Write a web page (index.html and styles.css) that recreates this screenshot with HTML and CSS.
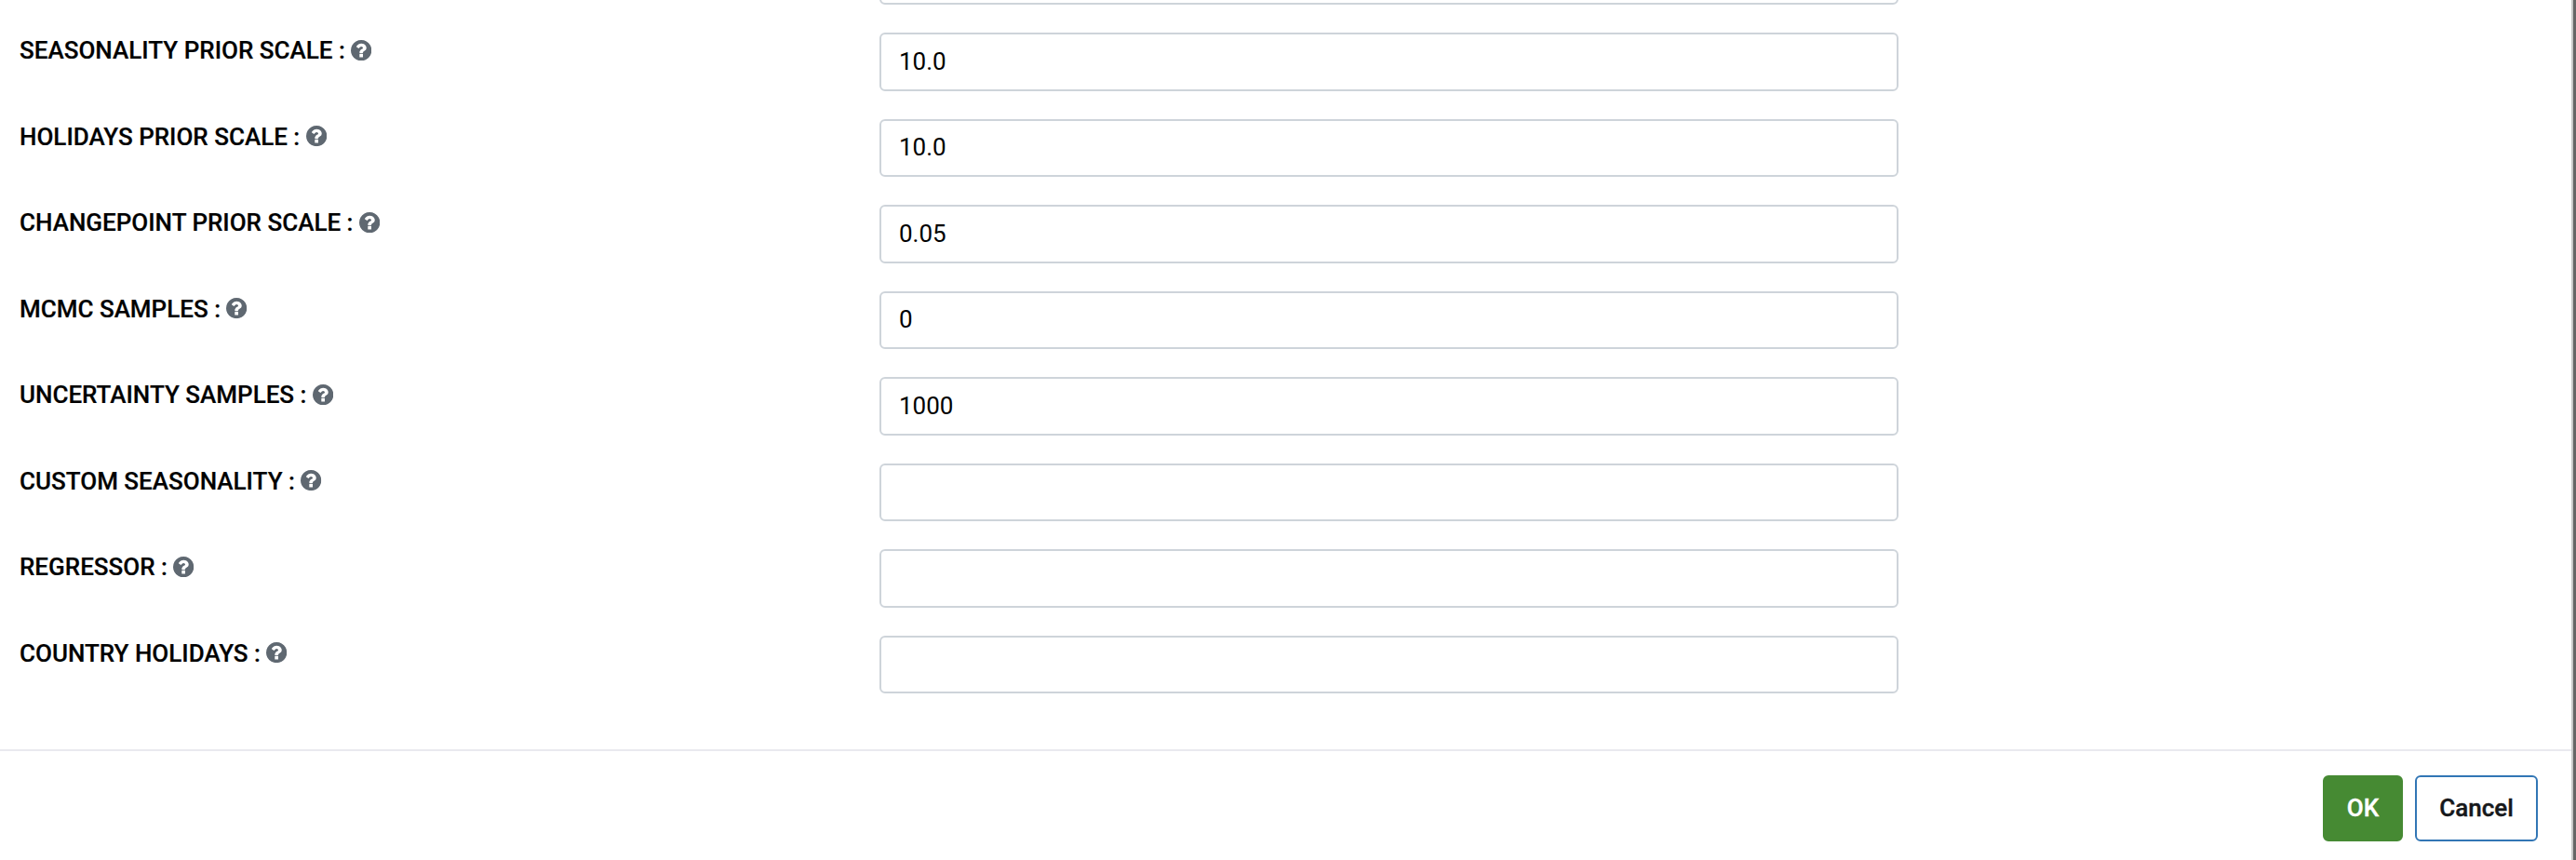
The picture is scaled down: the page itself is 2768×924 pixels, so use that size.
FILE: index.html
```
<!DOCTYPE html>
<html lang="en">
<head>
<meta charset="utf-8">
<title>Model parameters</title>
<link rel="stylesheet" href="styles.css">
</head>
<body>
<svg class="sprite" aria-hidden="true">
  <symbol id="help" viewBox="128 128 1536 1536">
    <path d="M1024 1376v-192q0-14-9-23t-23-9h-192q-14 0-23 9t-9 23v192q0 14 9 23t23 9h192q14 0 23-9t9-23zm256-672q0-88-55.500-163t-138.500-116-170-41q-243 0-371 213-15 24 8 42l132 100q7 6 19 6 16 0 25-12 53-68 86-92 34-24 86-24 48 0 85.500 26t37.500 59q0 38-20 61t-68 45q-63 28-115.500 86.500t-52.500 125.500v36q0 14 9 23t23 9h192q14 0 23-9t9-23q0-19 21.500-49.500t54.500-49.500q32-18 49-28.500t46-35 44.500-48 28-60.500 12.500-81zm384 192q0 209-103 385.500t-279.500 279.500-385.500 103-385.500-103-279.500-279.500-103-385.500 103-385.500 279.500-279.500 385.500-103 385.500 103 279.500 279.500 103 385.500z"/>
  </symbol>
</svg>
<div class="dialog">
  <main class="form">
    <div class="row"><span></span><input class="field" type="text"></div>
    <div class="row"><label class="label">SEASONALITY PRIOR SCALE :<svg class="help"><use href="#help"/></svg></label><input class="field" type="text" value="10.0"></div>
    <div class="row"><label class="label">HOLIDAYS PRIOR SCALE :<svg class="help"><use href="#help"/></svg></label><input class="field" type="text" value="10.0"></div>
    <div class="row"><label class="label">CHANGEPOINT PRIOR SCALE :<svg class="help"><use href="#help"/></svg></label><input class="field" type="text" value="0.05"></div>
    <div class="row"><label class="label">MCMC SAMPLES :<svg class="help"><use href="#help"/></svg></label><input class="field" type="text" value="0"></div>
    <div class="row"><label class="label">UNCERTAINTY SAMPLES :<svg class="help"><use href="#help"/></svg></label><input class="field" type="text" value="1000"></div>
    <div class="row"><label class="label">CUSTOM SEASONALITY :<svg class="help"><use href="#help"/></svg></label><input class="field" type="text"></div>
    <div class="row"><label class="label">REGRESSOR :<svg class="help"><use href="#help"/></svg></label><input class="field" type="text"></div>
    <div class="row"><label class="label">COUNTRY HOLIDAYS :<svg class="help"><use href="#help"/></svg></label><input class="field" type="text"></div>
  </main>
  <footer class="footer">
    <button class="button ok">OK</button>
    <button class="button cancel">Cancel</button>
  </footer>
</div>
</body>
</html>
```
FILE: styles.css
```
* { box-sizing: border-box; }

body {
  margin: 0;
  height: 924px;
  overflow: hidden;
  background: #666;
  font: 26px/30px Roboto, sans-serif;
  color: #000;
}

.sprite { display: none; }

.dialog {
  display: flex;
  flex-direction: column;
  width: 2765px;
  height: 924px;
  overflow: hidden;
  background: #fff;
  border-right: 2px solid #c8c8c8;
}

/* The form is scrolled so that its first row is partly out of view. */
.form {
  flex: none;
  height: 862.5px;
  margin-top: -57.5px;
}

.row {
  display: grid;
  grid-template-columns: 924px 1095px;
  height: 92.5px;
  padding-left: 21px;
}

.label {
  display: flex;
  align-items: center;
  height: 30px;
  margin-top: 4px;
  font-weight: 500;
  -webkit-text-stroke: 0.2px;
}

.help {
  width: 22.3px;
  height: 22.3px;
  margin-left: 6.4px;
  fill: #5f6871;
  -webkit-text-stroke: 0;
}

.field {
  width: 1095px;
  height: 62.5px;
  padding: 0 19px 1px;
  border: 2px solid #ced4da;
  border-radius: 6px;
  background: #fff;
  font: inherit;
  color: #000;
}

.footer {
  display: flex;
  flex: 1;
  justify-content: flex-end;
  gap: 13px;
  padding: 26px 36px 0 0;
  border-top: 2px solid #e9e9ef;
}

.button {
  height: 71px;
  padding: 0 0 2px;
  border: 2px solid;
  border-radius: 6px;
  font: 500 26px/30px Roboto, sans-serif;
  -webkit-text-stroke: 0.4px;
}

.ok {
  width: 86px;
  background: #468a33;
  border-color: #468a33;
  color: #fff;
}

.cancel {
  width: 132px;
  background: #fff;
  border-color: #3276b5;
  color: #16181b;
}
```
